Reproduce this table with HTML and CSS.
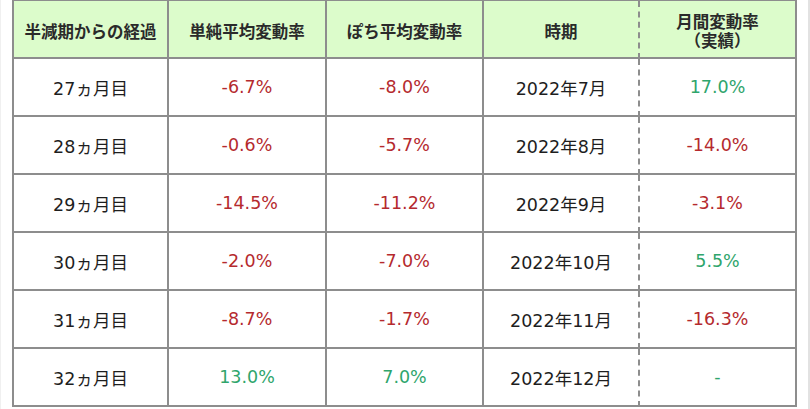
FILE: index.html
```html
<!DOCTYPE html>
<html lang="ja">
<head>
<meta charset="utf-8">
<link rel="stylesheet" href="styles.css">
</head>
<body>
<div class="frame">
<table class="tbl">
  <colgroup>
    <col class="c1"><col class="c2"><col class="c3"><col class="c4"><col class="c5">
  </colgroup>
  <thead>
    <tr>
      <th>半減期からの経過</th>
      <th>単純平均変動率</th>
      <th>ぽち平均変動率</th>
      <th>時期</th>
      <th>月間変動率<br>（実績）</th>
    </tr>
  </thead>
  <tbody>
    <tr><td>27ヵ月目</td><td class="neg">-6.7%</td><td class="neg">-8.0%</td><td>2022年7月</td><td class="pos">17.0%</td></tr>
    <tr><td>28ヵ月目</td><td class="neg">-0.6%</td><td class="neg">-5.7%</td><td>2022年8月</td><td class="neg">-14.0%</td></tr>
    <tr><td>29ヵ月目</td><td class="neg">-14.5%</td><td class="neg">-11.2%</td><td>2022年9月</td><td class="neg">-3.1%</td></tr>
    <tr><td>30ヵ月目</td><td class="neg">-2.0%</td><td class="neg">-7.0%</td><td>2022年10月</td><td class="pos">5.5%</td></tr>
    <tr><td>31ヵ月目</td><td class="neg">-8.7%</td><td class="neg">-1.7%</td><td>2022年11月</td><td class="neg">-16.3%</td></tr>
    <tr><td>32ヵ月目</td><td class="pos">13.0%</td><td class="pos">7.0%</td><td>2022年12月</td><td class="pos">-</td></tr>
  </tbody>
</table>
</div>
</body>
</html>
```
FILE: styles.css
```css
html, body {
  margin: 0;
  padding: 0;
  background: #ffffff;
}
body {
  font-family: "Noto Sans CJK JP", "Noto Sans", sans-serif;
  color: #222;
}
.frame {
  width: 810px;
  height: 409px;
  box-sizing: border-box;
  border-left: 1px solid #f0f0f0;
  border-right: 2px solid #e2e2e2;
  padding-left: 11px;
  overflow: hidden;
}
.tbl {
  border-collapse: separate;
  border-spacing: 0;
  table-layout: fixed;
  width: 785px;
  border-left: 2px solid #8d8d8d;
  border-top: 1px solid #8d8d8d;
}
.c1 { width: 155px; }
.c2 { width: 158px; }
.c3 { width: 157px; }
.c4 { width: 156px; }
.c5 { width: 157px; }
.tbl th, .tbl td {
  border-right: 2px solid #8d8d8d;
  border-bottom: 2px solid #8d8d8d;
  text-align: center;
  vertical-align: middle;
  padding: 0;
  box-sizing: border-box;
  height: 58px;
}
.tbl th:nth-child(4), .tbl td:nth-child(4) {
  border-right: 2px dashed #8d8d8d;
}
.tbl th {
  background: #dcfccb;
  font-size: 16.5px;
  font-weight: 700;
  line-height: 19px;
  padding-top: 4px;
  color: #2a2a2a;
}
.tbl td {
  font-family: "DejaVu Sans", "Noto Sans CJK JP", sans-serif;
  font-size: 17.5px;
  font-weight: 400;
  color: #1e1e1e;
}
.tbl td.neg { color: #b52a2e; }
.tbl td.pos { color: #2fa56c; }
```
